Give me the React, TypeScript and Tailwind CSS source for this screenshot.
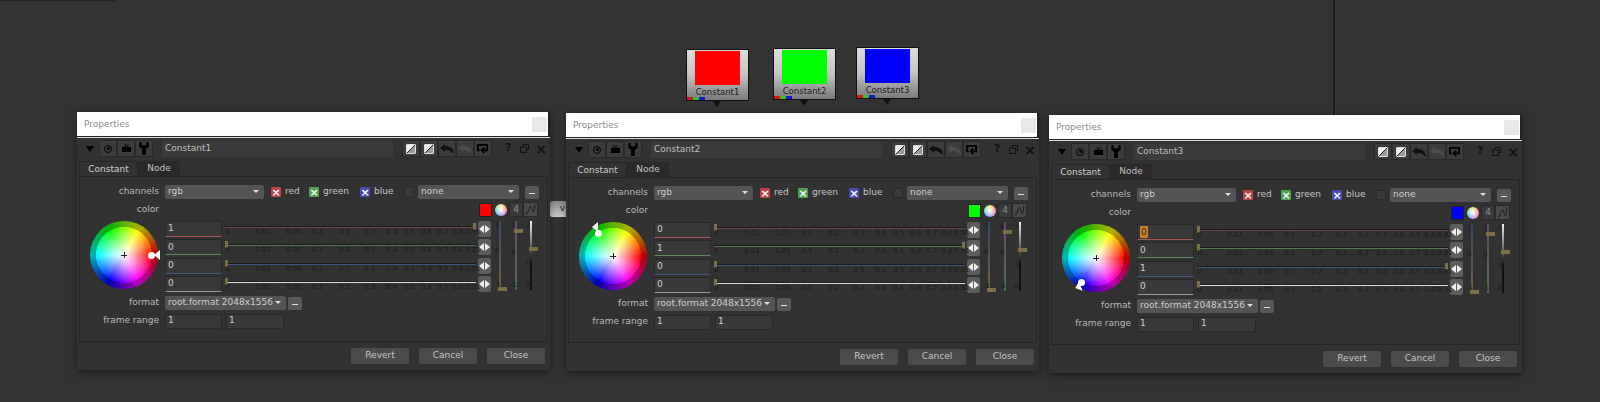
import type { ReactNode } from 'react';

const LABELS = [
  ['0', 'w-[30px]'],
  ['0.01', 'w-[31px]'],
  ['0.05', 'w-[26px]'],
  ['0.1', 'w-[27px]'],
  ['0.2', 'w-[25px]'],
  ['0.3', 'w-[22px]'],
  ['0.4', 'w-[18px]'],
  ['0.5', 'w-[17px]'],
  ['0.6', 'w-[16px]'],
  ['0.7', 'w-[15px]'],
  ['0.8', 'w-[13px]'],
  ['0.91', 'w-[10px]'],
];

function Dropdown({ label, className }: { label: string; className: string }) {
  return (
    <div className={`flex h-[14px] items-center justify-between whitespace-nowrap rounded-[2px] bg-[#545454] px-[3px] text-[9px] text-[#cccccc] ${className}`}>
      <span>{label}</span>
      <span className="mb-[2px] mr-[2px] border-x-[3px] border-t-[3px] border-x-transparent border-t-[#dddddd]" />
    </div>
  );
}

function Check({ color, label }: { color: string; label: string }) {
  return (
    <div className="flex items-center gap-[4px] text-[9px] text-[#c4c4c4]">
      <span className={`flex h-[10px] w-[10px] items-center justify-center rounded-[1px] text-[11px] font-bold leading-none text-white ${color}`}>×</span>
      <span>{label}</span>
    </div>
  );
}

function MinusBtn({ className = '' }: { className?: string }) {
  return (
    <div className={`flex h-[13px] w-[14px] items-center justify-center rounded-[2px] bg-[#585858] ${className}`}>
      <span className="mt-[3px] h-px w-[6px] bg-[#dddddd]" />
    </div>
  );
}

function Spin() {
  return (
    <div className="flex h-[16px] w-[13px] items-center justify-center gap-[1px] rounded-[2px] bg-[#5c5c5c]">
      <span className="border-y-[4px] border-r-[5px] border-y-transparent border-r-[#eeeeee]" />
      <span className="border-y-[4px] border-l-[5px] border-y-transparent border-l-[#eeeeee]" />
    </div>
  );
}

function SliderRow({ value, line, track, handleRight, focus }: { value: string; line: string; track: string; handleRight?: boolean; focus?: boolean }) {
  return (
    <div className="flex h-[18.33px] items-start">
      <div className={`flex h-[16px] w-[57px] items-center rounded-[1px] border border-[#292929] bg-[#393939] pl-[2px] text-[9px] text-[#cfcfcf] ${line}`}>
        {focus ? <span className="rounded-[1px] bg-[#c87f2c] px-[1px] leading-[12px] text-[#3a2a10]">{value}</span> : value}
      </div>
      <div className="relative ml-[3px] h-[18px] w-[251px]">
        <div className="absolute left-0 right-0 top-[2px] h-[4px] bg-[repeating-linear-gradient(90deg,#242424_0,#242424_1px,transparent_1px,transparent_9px)] opacity-35" />
        <div className={`absolute left-0 right-0 top-[5px] h-[2px] border-t border-t-[#1c1c1c] ${track}`} />
        <div className={`absolute top-[2px] h-[7px] w-[3px] bg-[#7a6f48] ${handleRight ? 'right-0' : 'left-0'}`} />
        <div className="absolute left-0 top-[7px] flex whitespace-nowrap text-[7px] leading-[9px] text-[#1c1c1c]">
          {LABELS.map(([t, w]) => (
            <span key={t} className={w}>{t}</span>
          ))}
        </div>
      </div>
      <div className="ml-[2px]"><Spin /></div>
    </div>
  );
}

function VSlider({ line, top, middle, bottom, handle, width }: { line: string; top: string; middle: string; bottom: string; handle: string; width: string }) {
  return (
    <div className={`relative h-[70px] ${width}`}>
      <div className={`absolute left-[4px] top-0 h-[69px] w-[2px] ${line}`} />
      <span className="absolute left-0 top-0 text-[7px] leading-[9px] text-[#1c1c1c]">{top}</span>
      <span className={`absolute left-0 text-[7px] leading-[9px] text-[#1c1c1c] ${middle}`}>0</span>
      <span className="absolute left-[-1px] top-[60px] text-[7px] leading-[9px] text-[#1c1c1c]">{bottom}</span>
      <div className={`absolute left-[3px] h-[4px] w-[9px] bg-[#7a6f48] ${handle}`} />
    </div>
  );
}

function ToolBtn({ children }: { children: ReactNode }) {
  return <div className="flex h-[17px] w-[18px] items-center justify-center border border-[#2a2a2a] bg-[#3c3c3c]">{children}</div>;
}

function HalfBox() {
  return <span className="h-[10px] w-[10px] rounded-[1px] border border-[#e0e0e0] bg-[linear-gradient(135deg,#f0f0f0_46%,#222222_46%,#222222_56%,#9a9a9a_56%)]" />;
}

function Undo({ color }: { color: string }) {
  return (
    <svg viewBox="0 0 14 10" className="h-[10px] w-[14px]" fill={color}>
      <path d="M5 0 0 4l5 4V6c3-.5 6 1 9 4 0-6-4-8-9-8z" />
    </svg>
  );
}

function Wheel({ handle, marker }: { handle: string; marker: ReactNode }) {
  return (
    <div className="relative h-[68px] w-[68px] rounded-full bg-[conic-gradient(from_90deg,#ff0000,#ff00ff,#0000ff,#00ffff,#00ff00,#ffff00,#ff0000)]">
      <div className="absolute inset-0 rounded-full bg-[radial-gradient(circle_closest-side,#ffffff_0%,rgba(255,255,255,0.6)_35%,rgba(255,255,255,0)_82%,rgba(0,0,0,0.3)_83%,rgba(0,0,0,0.3)_100%)]" />
      <span className="absolute left-[31px] top-[33.5px] h-px w-[6px] bg-[#222222]" />
      <span className="absolute left-[33.5px] top-[31px] h-[6px] w-px bg-[#222222]" />
      <span className={`absolute h-[7px] w-[7px] rounded-full bg-white ${handle}`} />
      {marker}
    </div>
  );
}

function Panel({ name, position, swatch, values, focusFirst, handleRow, wheelHandle, marker }: {
  name: string;
  position: string;
  swatch: string;
  values: string[];
  focusFirst?: boolean;
  handleRow: number;
  wheelHandle: string;
  marker: ReactNode;
}) {
  const rows = [
    ['border-b-[#a8565a]', 'bg-[#6b4444]'],
    ['border-b-[#5d8a5d]', 'bg-[#557555]'],
    ['border-b-[#3f5680]', 'bg-[#3d5580]'],
    ['border-b-[#999999]', 'bg-[#dddddd]'],
  ];
  return (
    <section className={`absolute w-[473px] bg-[#323232] shadow-[0_2px_8px_rgba(0,0,0,0.45)] ${position}`}>
      <header className="flex h-[24px] items-center justify-between border-r-2 border-r-[#222222] bg-white pl-[7px] pr-px text-[9px] text-[#8c8c8c]">
        <span className="mt-[2px]">Properties</span>
        <span className="h-[15px] w-[15px] bg-[#e8e8e8]" />
      </header>
      <div className="h-px bg-[#222222]" />
      <div className="h-px bg-[#dddddd]" />

      <div className="flex h-[21px] items-center px-[3px]">
        <div className="flex w-[19px] justify-center"><span className="border-x-[4px] border-t-[6px] border-x-transparent border-t-black" /></div>
        <ToolBtn><span className="flex h-[8px] w-[8px] items-center justify-center rounded-full border border-black"><span className="h-[3px] w-[3px] rounded-full bg-black" /></span></ToolBtn>
        <ToolBtn>
          <svg viewBox="0 0 12 10" className="h-[9px] w-[11px]" fill="black"><path d="M1 3h10v6H1zM3 0l3 3 3-3-.6-.3L6 2 3.6-.3z" /></svg>
        </ToolBtn>
        <ToolBtn>
          <svg viewBox="0 0 10 14" className="h-[13px] w-[10px]" fill="black"><path d="M0 0h2.5v3.5h5V0H10v5L7 7.5V14H3V7.5L0 5z" /></svg>
        </ToolBtn>
        <div className="ml-[9px] flex h-[16px] w-[231px] items-center rounded-[1px] bg-[#3b3b3b] pl-[3px] text-[9px] text-[#bdbdbd]">{name}</div>
        <div className="ml-[9px] flex items-center">
          <ToolBtn><HalfBox /></ToolBtn>
          <ToolBtn><HalfBox /></ToolBtn>
          <ToolBtn><Undo color="#111111" /></ToolBtn>
          <ToolBtn><Undo color="#4d4d4d" /></ToolBtn>
          <ToolBtn>
            <svg viewBox="0 0 12 12" className="h-[11px] w-[11px]" fill="none" stroke="black" strokeWidth="2"><path d="M3 8H1V2h10v6H7M8 5 5 8l3 3" /></svg>
          </ToolBtn>
        </div>
        <span className="ml-[13px] text-[11px] font-bold text-[#111111]">?</span>
        <svg viewBox="0 0 9 9" className="ml-[9px] h-[9px] w-[9px]" fill="none" stroke="#111111"><path d="M3 2.5V.5h5.5v5h-2M.5 3h6v5.5h-6z" /></svg>
        <span className="ml-[6px] text-[14px] font-bold leading-none text-[#111111]">×</span>
      </div>

      <div className="mt-[2px] flex h-[15px] pl-[2px]">
        <div className="w-[59px] rounded-t-[2px] border-x border-t border-[#272727] text-center text-[9px] leading-[14px] text-[#cfcfcf]">Constant</div>
        <div className="w-[42px] rounded-t-[2px] bg-[#2a2a2a] text-center text-[9px] leading-[15px] text-[#c0c0c0]">Node</div>
      </div>

      <div className="mx-[2px] flex h-[166px] flex-col rounded-[1px] border border-[#262626] pt-[8px] text-[9px] text-[#b8b8b8]">
        <div className="flex h-[14px] items-center">
          <span className="w-[79px] whitespace-nowrap text-right">channels</span>
          <Dropdown label="rgb" className="ml-[6px] w-[99px]" />
          <div className="ml-[7px] w-[38px]"><Check color="bg-[#c04048]" label="red" /></div>
          <div className="w-[51px]"><Check color="bg-[#4ea050]" label="green" /></div>
          <div className="w-[44px]"><Check color="bg-[#4a4ab0]" label="blue" /></div>
          <span className="h-[10px] w-[10px] rounded-[1px] border border-[#2a2a2a] bg-[#3a3a3a]" />
          <Dropdown label="none" className="ml-[4px] w-[101px]" />
          <MinusBtn className="ml-[6px]" />
        </div>

        <div className="mt-[3px] flex h-[15px] items-center">
          <span className="w-[79px] text-right">color</span>
          <div className="ml-auto mr-[9px] flex items-center">
            <span className={`h-[14px] w-[13px] border border-[#222222] ${swatch}`} />
            <span className="ml-[3px] h-[12px] w-[12px] rounded-full bg-[radial-gradient(circle_closest-side,#ffffff,rgba(255,255,255,0)),conic-gradient(#f4e27a,#f08a8a,#d38be0,#7ea8ee,#7fe0b0,#f4e27a)]" />
            <span className="ml-[2px] flex h-[15px] w-[14px] items-center justify-center border border-[#2a2a2a] bg-[#3a3a3a] text-[9px] text-[#8d8d8d]">4</span>
            <span className="flex h-[15px] w-[15px] items-center justify-center border border-[#2a2a2a] bg-[#4a4a4a]">
              <svg viewBox="0 0 12 12" className="h-[11px] w-[11px]" fill="none" stroke="#222222" strokeWidth="1.2"><path d="M1 11C4 11 4 3 6 3s1 6 3 6 1-7 2-8" /></svg>
            </span>
          </div>
        </div>

        <div className="mt-[4px] flex h-[73px]">
          <div className="ml-[10px] w-[75px]">
            <Wheel handle={wheelHandle} marker={marker} />
          </div>
          <div className="flex flex-col">
            {values.map((v, i) => (
              <SliderRow
                key={i}
                value={v}
                line={rows[i][0]}
                track={rows[i][1]}
                handleRight={i === handleRow}
                focus={focusFirst && i === 0}
              />
            ))}
          </div>
          <div className="ml-[4px] flex">
            <VSlider width="w-[16px]" line="bg-[linear-gradient(#34496f,#7a5f3a)]" top="1" middle="top-[26px]" bottom="-1" handle="top-[66px]" />
            <VSlider width="w-[15px]" line="bg-[linear-gradient(#6a4a70,#4a6e4a)]" top="1" middle="top-[27px]" bottom="-1" handle="top-[8px]" />
            <VSlider width="w-[15px]" line="bg-[linear-gradient(#eeeeee,#111111_60%)]" top="1" middle="top-[38px]" bottom="0" handle="top-[26px]" />
          </div>
        </div>

        <div className="mt-[2px] flex h-[14px] items-center">
          <span className="w-[79px] text-right">format</span>
          <Dropdown label="root.format 2048x1556" className="ml-[6px] w-[121px]" />
          <MinusBtn className="ml-[2px]" />
        </div>

        <div className="mt-[3px] flex h-[16px] items-center">
          <span className="w-[79px] whitespace-nowrap text-right">frame range</span>
          <span className="ml-[6px] flex h-[15px] w-[57px] items-center rounded-[1px] border border-[#292929] bg-[#393939] pl-[2px] text-[#cfcfcf]">1</span>
          <span className="ml-[4px] flex h-[15px] w-[58px] items-center rounded-[1px] border border-[#292929] bg-[#393939] pl-[2px] text-[#cfcfcf]">1</span>
        </div>
      </div>

      <footer className="flex h-[28px] items-center justify-end gap-[10px] pr-[5px] text-[9px] text-[#c4c4c4]">
        {['Revert', 'Cancel', 'Close'].map(b => (
          <div key={b} className="flex h-[16px] w-[58px] items-center justify-center rounded-[2px] bg-[#4b4b4b]">{b}</div>
        ))}
      </footer>
    </section>
  );
}

function GraphNode({ label, position, fill }: { label: string; position: string; fill: string }) {
  return (
    <div className={`absolute h-[52px] w-[63px] ${position}`}>
      <div className="flex h-full flex-col items-center border border-[#111111] bg-[linear-gradient(#dcdcdc,#c4c4c4_50%,#7a7a7a)] pt-px">
        <div className={`h-[34px] w-[45px] ${fill}`} />
        <span className="mt-[1px] whitespace-nowrap text-[8.5px] leading-[12px] text-[#1a1a1a]">{label}</span>
        <div className="absolute bottom-[1px] left-[1px] flex">
          <span className="h-[3px] w-[6px] bg-[#d01818]" />
          <span className="h-[3px] w-[6px] bg-[#30c030]" />
          <span className="h-[3px] w-[6px] bg-[#1818d0]" />
        </div>
      </div>
      <span className="absolute left-[27px] top-[52px] border-x-[4px] border-t-[6px] border-x-transparent border-t-[#111111]" />
    </div>
  );
}

export default function App() {
  return (
    <div className="relative h-[402px] w-[1600px] overflow-hidden bg-[#333333] font-['DejaVu_Sans',sans-serif]">
      <div className="absolute left-0 top-0 h-px w-[115px] bg-[#222222]" />
      <div className="absolute left-[1333px] top-0 h-[115px] w-[2px] bg-[#1d1d1d]" />

      <GraphNode label="Constant1" position="left-[686px] top-[49px]" fill="bg-[#ff0000]" />
      <GraphNode label="Constant2" position="left-[773px] top-[48px]" fill="bg-[#00ff00]" />
      <GraphNode label="Constant3" position="left-[856px] top-[47px]" fill="bg-[#0000ff]" />

      <div className="absolute left-[550px] top-[201px] flex h-[16px] w-[18px] items-center justify-end rounded-[2px] bg-[linear-gradient(#8a8a8a,#d0d0d0)] pr-[3px] text-[9px] text-[#222222]">v</div>

      <Panel
        name="Constant1"
        position="left-[77px] top-[112px]"
        swatch="bg-[#ff0000]"
        values={['1', '0', '0', '0']}
        handleRow={0}
        wheelHandle="left-[58px] top-[30.5px]"
        marker={<span className="absolute left-[64px] top-[29px] border-y-[5px] border-r-[6px] border-y-transparent border-r-white" />}
      />
      <Panel
        name="Constant2"
        position="left-[566px] top-[113px]"
        swatch="bg-[#00ff00]"
        values={['0', '1', '0', '0']}
        handleRow={1}
        wheelHandle="left-[16px] top-[7.5px]"
        marker={<span className="absolute left-[13px] top-0 border-y-[5px] border-r-[6px] border-y-transparent border-r-white" />}
      />
      <Panel
        name="Constant3"
        position="left-[1049px] top-[115px]"
        swatch="bg-[#0000ff]"
        values={['0', '0', '1', '0']}
        focusFirst
        handleRow={2}
        wheelHandle="left-[15.5px] top-[54.5px]"
        marker={<span className="absolute left-[13px] top-[58px] -rotate-[20deg] border-y-[5px] border-r-[6px] border-y-transparent border-r-white" />}
      />
    </div>
  );
}
